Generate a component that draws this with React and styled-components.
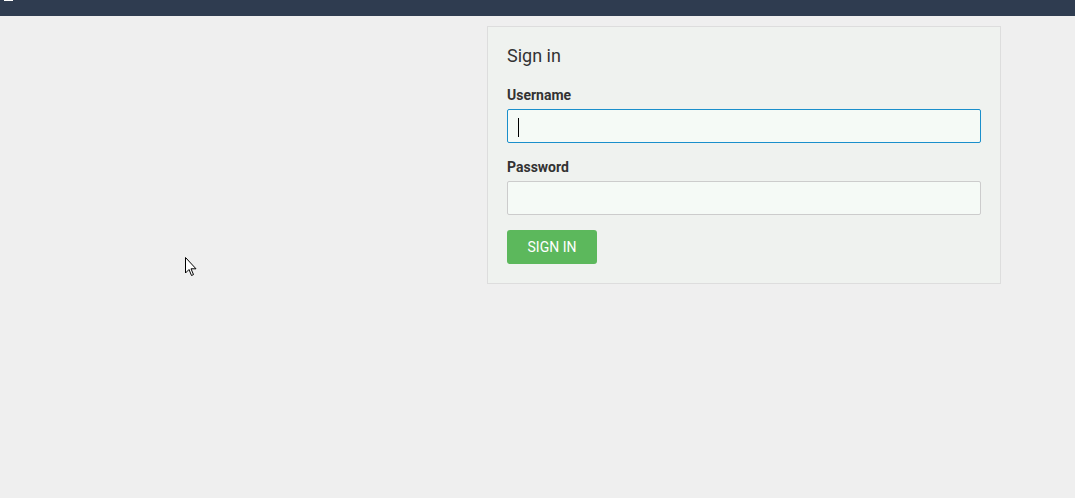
import React from 'react';
import styled, { createGlobalStyle } from 'styled-components';

const GlobalStyle = createGlobalStyle`
  html, body {
    margin: 0;
    padding: 0;
    background: #efefef;
    font-family: Roboto, "Liberation Sans", Arial, sans-serif;
    color: #333333;
  }
  * { box-sizing: border-box; }
`;

const TopBar = styled.header`
  height: 16px;
  background: #2f3c50;
  display: flex;
  align-items: flex-start;
  padding-left: 4px;
`;

const LogoTail = styled.span`
  display: block;
  width: 9px;
  height: 1px;
  background: #ffffff;
`;

const Main = styled.main`
  position: relative;
  display: grid;
  grid-template-columns: 487px 514px;
  padding-top: 10px;
  min-height: 482px;
`;

const Panel = styled.section`
  grid-column: 2;
  align-self: start;
  background: #eff2ef;
  border: 1px solid #dddddd;
  padding: 19px;
`;

const Title = styled.h3`
  margin: 0 0 19px;
  font-size: 18px;
  line-height: 20px;
  font-weight: 400;
  color: #333333;
`;

const Field = styled.div`
  display: flex;
  flex-direction: column;
  margin-bottom: ${p => p.gap}px;
`;

const Label = styled.label`
  font-size: 14px;
  line-height: 20px;
  font-weight: 700;
  margin-bottom: 4px;
`;

const InputWrap = styled.div`
  position: relative;
`;

const Input = styled.input`
  display: block;
  height: 34px;
  width: 100%;
  padding: 0 10px;
  font-size: 14px;
  font-family: inherit;
  background: #f5faf6;
  border: 1px solid ${p => (p.$active ? '#1a8fcb' : '#cccccc')};
  border-radius: 2px;
  outline: none;
  caret-color: transparent;
`;

const Caret = styled.span`
  position: absolute;
  left: 11px;
  top: 9px;
  width: 1px;
  height: 19px;
  background: #000000;
  pointer-events: none;
`;

const Button = styled.button`
  width: 90px;
  height: 34px;
  border: none;
  border-radius: 3px;
  background: #5cb85c;
  color: #ffffff;
  font-family: inherit;
  font-size: 14px;
  text-transform: uppercase;
  cursor: pointer;
`;

const Pointer = styled.svg`
  position: absolute;
  left: 185px;
  top: 241px;
  width: 13px;
  height: 21px;
  pointer-events: none;
`;

export default function App() {
  return (
    <>
      <GlobalStyle />
      <TopBar>
        <LogoTail />
      </TopBar>
      <Main>
        <Panel>
          <Title>Sign in</Title>
          <Field gap={14}>
            <Label htmlFor="username">Username</Label>
            <InputWrap>
              <Input id="username" type="text" $active />
              <Caret />
            </InputWrap>
          </Field>
          <Field gap={15}>
            <Label htmlFor="password">Password</Label>
            <Input id="password" type="password" />
          </Field>
          <Button type="submit">Sign in</Button>
        </Panel>
        <Pointer viewBox="0 0 13 21">
          <path
            d="M0.5 0.5 L0.5 16 L4 12.5 L6.5 18.5 L8.5 17.6 L6 11.8 L11 11.8 Z"
            fill="#ffffff"
            stroke="#000000"
            strokeWidth="1"
            strokeLinejoin="miter"
          />
        </Pointer>
      </Main>
    </>
  );
}
